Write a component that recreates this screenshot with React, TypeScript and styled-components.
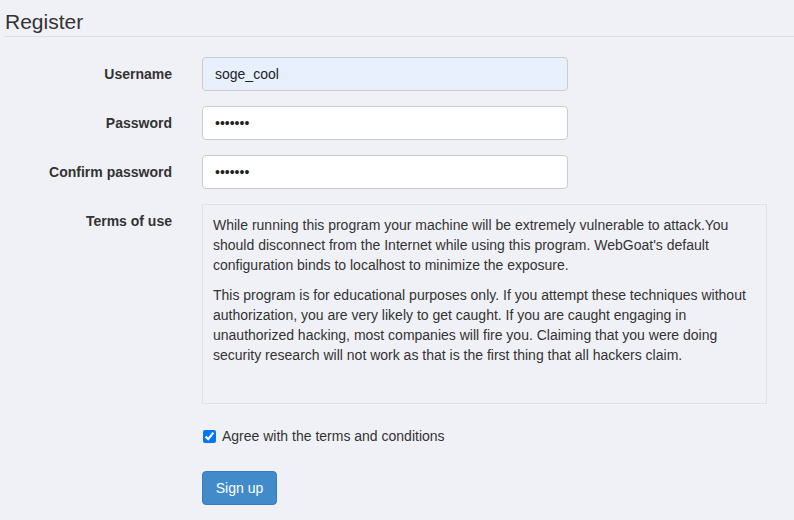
import React from "react";
import styled, { createGlobalStyle } from "styled-components";

const Global = createGlobalStyle`
  html, body { margin: 0; padding: 0; background: #f0f1f6; }
  body {
    font-family: "Liberation Sans", Arial, sans-serif;
    font-size: 14px;
    line-height: 20px;
    color: #333;
  }
  * { box-sizing: border-box; }
`;

const Page = styled.div`
  padding: 0 0 0 4px;
  min-height: 520px;
`;

const Title = styled.h3`
  margin: 10px 0 0;
  padding: 0 0 3px 1px;
  font-size: 21px;
  line-height: 23px;
  font-weight: 400;
  color: #333;
  border-bottom: 1px solid #dcdde2;
`;

const Form = styled.form`
  display: grid;
  grid-template-columns: 168px 565px;
  column-gap: 30px;
  margin-top: 20px;
`;

const Label = styled.label`
  text-align: right;
  font-weight: 700;
  padding-top: 7px;
  line-height: 20px;
  margin-bottom: 15px;
`;

const Control = styled.div<{ $mb?: number; $mt?: number }>`
  grid-column: 2;
  margin-top: ${(p) => p.$mt ?? 0}px;
  margin-bottom: ${(p) => p.$mb ?? 15}px;
`;

const Input = styled.input<{ $autofill?: boolean }>`
  display: block;
  width: 366px;
  height: 34px;
  padding: 6px 12px;
  font-family: "Liberation Sans", Arial, sans-serif;
  font-size: 14px;
  line-height: 20px;
  color: #222;
  background: ${(p) => (p.$autofill ? "#e8f0fe" : "#fff")};
  border: 1px solid #ccc;
  border-radius: 4px;
  outline: none;
`;

const Terms = styled.div`
  height: 200px;
  padding: 10px 10px;
  border: 1px solid #e0e1e5;
  background: #f0f1f6;
  color: #333;
  p { margin: 0 0 10px; }
`;

const CheckRow = styled.label`
  display: flex;
  align-items: center;
  padding-left: 1px;
  line-height: 20px;
  color: #333;
`;

const Check = styled.input`
  width: 13px;
  height: 13px;
  margin: 0 6px 0 0;
  accent-color: #0075ff;
`;

const Button = styled.button`
  height: 34px;
  width: 75px;
  padding: 6px 12px;
  font-family: "Liberation Sans", Arial, sans-serif;
  font-size: 14px;
  line-height: 20px;
  color: #fff;
  background: #428bca;
  border: 1px solid #357ebd;
  border-radius: 4px;
`;

export default function App() {
  return (
    <Page>
      <Global />
      <Title>Register</Title>
      <Form onSubmit={(e) => e.preventDefault()}>
        <Label>Username</Label>
        <Control>
          <Input $autofill type="text" defaultValue="soge_cool" />
        </Control>
        <Label>Password</Label>
        <Control>
          <Input type="password" defaultValue="1234567" />
        </Control>
        <Label>Confirm password</Label>
        <Control>
          <Input type="password" defaultValue="1234567" />
        </Control>
        <Label>Terms of use</Label>
        <Control $mb={0}>
          <Terms>
            <p>
              While running this program your machine will be extremely vulnerable to attack.You should
              disconnect from the Internet while using this program. WebGoat's default configuration binds to
              localhost to minimize the exposure.
            </p>
            <p>
              This program is for educational purposes only. If you attempt these techniques without
              authorization, you are very likely to get caught. If you are caught engaging in unauthorized
              hacking, most companies will fire you. Claiming that you were doing security research will not
              work as that is the first thing that all hackers claim.
            </p>
          </Terms>
        </Control>
        <Control $mt={22} $mb={0}>
          <CheckRow>
            <Check type="checkbox" defaultChecked />
            Agree with the terms and conditions
          </CheckRow>
        </Control>
        <Control $mt={25}>
          <Button type="submit">Sign up</Button>
        </Control>
      </Form>
    </Page>
  );
}
